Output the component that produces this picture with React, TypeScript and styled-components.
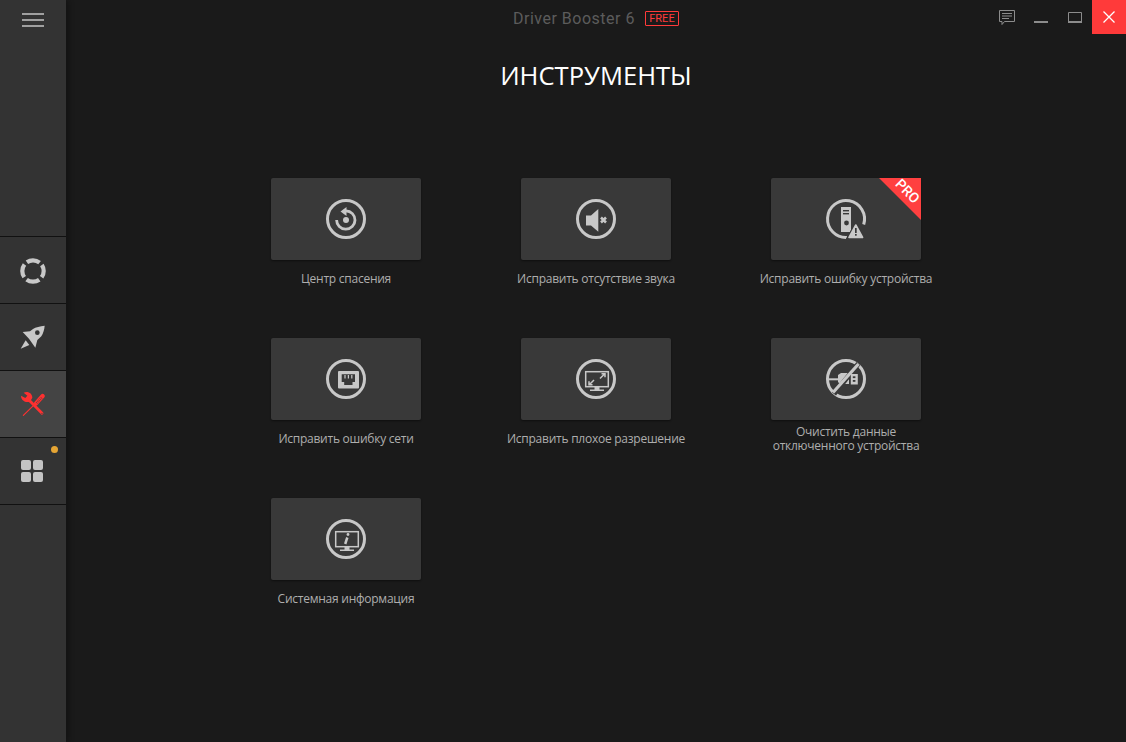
import React from "react";
import styled, { createGlobalStyle } from "styled-components";

const Global = createGlobalStyle`
  html, body { margin: 0; padding: 0; height: 100%; background: #1a1a1a; }
  #root { height: 100%; }
  * { box-sizing: border-box; }
`;

const Shell = styled.div`
  display: flex;
  width: 1126px;
  height: 742px;
  overflow: hidden;
  background: #1a1a1a;
  font-family: "Open Sans", "Noto Sans", sans-serif;
`;

const Sidebar = styled.nav`
  flex: 0 0 66px;
  display: flex;
  flex-direction: column;
  background: #333333;
  box-shadow: 3px 0 5px rgba(0, 0, 0, 0.28);
  z-index: 1;
`;

const MenuButton = styled.div`
  height: 236px;
  padding: 13px 0 0 22px;
  display: flex;
  flex-direction: column;
  gap: 4px;
`;

const MenuBar = styled.span`
  width: 22px;
  height: 2px;
  background: #a0a0a0;
`;

const NavList = styled.div`
  border-top: 1px solid #111111;
`;

const NavItem = styled.div<{ $active?: boolean }>`
  position: relative;
  height: 67px;
  display: flex;
  align-items: center;
  justify-content: center;
  border-bottom: 1px solid #111111;
  background: ${(p) => (p.$active ? "#444444" : "transparent")};
`;

const Dot = styled.span`
  position: absolute;
  left: 51px;
  top: 8px;
  width: 7px;
  height: 7px;
  border-radius: 50%;
  background: #e5a534;
`;

const AppsGrid = styled.div`
  display: grid;
  grid-template-columns: 10px 10px;
  grid-auto-rows: 10px;
  gap: 2px;
  margin-right: 2px;
`;

const AppTile = styled.span`
  border-radius: 2px;
  background: #c4c4c4;
`;

const Main = styled.main`
  flex: 1;
  display: flex;
  flex-direction: column;
  min-width: 0;
`;

const Header = styled.header`
  height: 34px;
  display: grid;
  grid-template-columns: 1fr auto 1fr;
  align-items: center;
`;

const Brand = styled.div`
  grid-column: 2;
  display: flex;
  align-items: center;
  gap: 10px;
  padding-top: 2px;
`;

const BrandName = styled.span`
  font-family: "Roboto", sans-serif;
  font-size: 16px;
  letter-spacing: 0.5px;
  color: #5c5c5c;
`;

const FreeBadge = styled.span`
  width: 34px;
  height: 15px;
  display: flex;
  align-items: center;
  justify-content: center;
  border: 1px solid #ff3a3a;
  border-radius: 1px;
  font-family: "Roboto", sans-serif;
  font-size: 11px;
  color: #ff3a3a;
`;

const Controls = styled.div`
  grid-column: 3;
  justify-self: end;
  display: flex;
`;

const Control = styled.div<{ $close?: boolean }>`
  width: 34px;
  height: 34px;
  display: flex;
  align-items: center;
  justify-content: center;
  background: ${(p) => (p.$close ? "#ff3a3a" : "transparent")};
`;

const Title = styled.h1`
  margin: 24px 0 0;
  height: 36px;
  font-size: 25.6px;
  line-height: 36px;
  font-weight: 400;
  text-align: center;
  color: #ffffff;
`;

const Tools = styled.div`
  width: 750px;
  margin: 84px auto 0;
  display: grid;
  grid-template-columns: repeat(3, 250px);
  row-gap: 40px;
`;

const Tool = styled.div`
  display: flex;
  flex-direction: column;
  align-items: center;
`;

const Card = styled.div`
  position: relative;
  width: 150px;
  height: 82px;
  display: flex;
  align-items: center;
  justify-content: center;
  background: #393939;
  border-radius: 2px;
  box-shadow: 0 1px 2px rgba(0, 0, 0, 0.45);
`;

const ProRibbon = styled.div`
  position: absolute;
  top: 0;
  right: 0;
  width: 42px;
  height: 42px;
  background: #ff4040;
  clip-path: polygon(0 0, 100% 0, 100% 100%);
`;

const ProText = styled.span`
  position: absolute;
  top: 5px;
  left: 15px;
  font-family: "Roboto", sans-serif;
  font-size: 14px;
  font-weight: 500;
  line-height: 16px;
  color: #ffffff;
  transform: rotate(45deg);
`;

const Label = styled.div`
  height: 38px;
  display: flex;
  align-items: center;
  text-align: center;
  white-space: pre-line;
  font-size: 12px;
  letter-spacing: -0.25px;
  line-height: 14px;
  color: #aeaeae;
`;

const C = "#c8c8c8";
const BG = "#393939";

const Ring = () => <circle cx="20" cy="20" r="18.5" fill="none" stroke={C} strokeWidth="3" />;

const Icon: React.FC<{ children: React.ReactNode }> = ({ children }) => (
  <svg width="40" height="40" viewBox="0 0 40 40" style={{ overflow: "visible" }}>
    {children}
  </svg>
);

const Monitor = () => (
  <>
    <rect x="9.7" y="12.7" width="22.6" height="15" fill="none" stroke={C} strokeWidth="1.5" />
    <path d="M18.5 28 H23.5 V31 H18.5 Z" fill={C} />
    <rect x="14" y="30.5" width="14" height="1.5" fill={C} />
  </>
);

const icons: Record<string, React.ReactNode> = {
  rescue: (
    <Icon>
      <Ring />
      <path d="M20 11.8 A 9.2 9.2 0 1 1 10.6 21" fill="none" stroke={C} strokeWidth="2.8" />
      <path d="M14.5 12.5 L20.5 8 V17 Z" fill={C} />
      <circle cx="20" cy="21" r="3" fill={C} />
    </Icon>
  ),
  sound: (
    <Icon>
      <Ring />
      <path d="M10 16.5 H15 L22.3 10 V32.7 L15 26.5 H10 Z" fill={C} />
      <path d="M25 18.5 L30 23.5 M30 18.5 L25 23.5" stroke={C} strokeWidth="2.5" />
    </Icon>
  ),
  device: (
    <Icon>
      <path d="M21 38.5 A 18.5 18.5 0 1 1 37.7 25.5" fill="none" stroke={C} strokeWidth="3" />
      <rect x="15" y="8" width="10" height="25" fill={C} />
      <rect x="17" y="11" width="6" height="1.4" fill={BG} />
      <rect x="17" y="14" width="6" height="1.4" fill={BG} />
      <circle cx="20.5" cy="24" r="2.4" fill={BG} />
      <path d="M29.8 23 L39.5 40.5 H20 Z" fill={BG} stroke={BG} strokeWidth="1" strokeLinejoin="round" />
      <path d="M29.8 26 L36.6 38.5 H23 Z" fill={C} stroke={C} strokeWidth="1.6" strokeLinejoin="round" />
      <rect x="29" y="29" width="1.7" height="5" fill={BG} />
      <rect x="29" y="35" width="1.7" height="1.7" fill={BG} />
    </Icon>
  ),
  network: (
    <Icon>
      <Ring />
      <rect x="12" y="12" width="21" height="17.5" rx="1" fill={C} />
      <path d="M15.7 15.3 H29 V23 H26.5 V26 H18.2 V23 H15.7 Z" fill={BG} />
      <path d="M19 16 V19.5 M22.4 16 V19.5 M25.8 16 V19.5" stroke={C} strokeWidth="1.2" />
    </Icon>
  ),
  resolution: (
    <Icon>
      <Ring />
      <Monitor />
      <path d="M24 19.5 L29 14.5 M25.5 14.8 H29 V18.3" fill="none" stroke={C} strokeWidth="1.5" />
      <path d="M18 21 L13 26 M13 22.2 V25.7 H16.5" fill="none" stroke={C} strokeWidth="1.5" />
    </Icon>
  ),
  unplug: (
    <Icon>
      <Ring />
      <path d="M2 20.3 H12" stroke={C} strokeWidth="2" />
      <path d="M12 16 L15 14 H23 V25 H14 L12 23 Z" fill={C} />
      <path d="M32.5 4.5 L8 35" stroke={BG} strokeWidth="5" />
      <rect x="24.8" y="15" width="7" height="10.5" fill={C} />
      <rect x="26.8" y="17.3" width="2.6" height="1.8" fill={BG} />
      <rect x="26.8" y="21" width="2.6" height="1.8" fill={BG} />
      <path d="M32.5 5 L7 33.5" stroke={C} strokeWidth="3.2" />
    </Icon>
  ),
  info: (
    <Icon>
      <Ring />
      <Monitor />
      <path d="M21.3 18.5 L19.2 25" stroke={C} strokeWidth="2.5" />
      <circle cx="22" cy="15.5" r="1.4" fill={C} />
    </Icon>
  ),
};

const Lifebuoy = () => (
  <svg width="26" height="26" viewBox="0 0 26 26" style={{ marginTop: 1 }}>
    <circle
      cx="13"
      cy="13"
      r="10.7"
      fill="none"
      stroke={C}
      strokeWidth="4.2"
      strokeDasharray="13.5 3.3"
      strokeDashoffset="6.75"
    />
  </svg>
);

const Rocket = () => (
  <svg width="26" height="26" viewBox="58 304 78 78" style={{ marginTop: 1 }}>
    <path
      d="M132 306 C118 308 105 310 97 316 L88 323 L66 325 L85 345 L104 372 L110 349 L122 338 C128 328 131 318 132 306 Z"
      fill={C}
    />
    <circle cx="110" cy="327" r="7" fill="#333333" />
    <path d="M75 350 L86 364 L60 375 Z" fill={C} />
  </svg>
);

const ToolsIcon = () => (
  <svg width="26" height="26" viewBox="60 80 78 78">
    <g fill="none" stroke="#ff3030" strokeLinecap="round">
      <path d="M70 153 L100 124" strokeWidth="3.5" />
      <path d="M108 117 L128 95" strokeWidth="13" />
      <path d="M84 104 L126 147" strokeWidth="8.5" />
    </g>
    <path
      d="M63 94 C63 108 76 116 90 112 L97 100 C97 87 84 79 71 85 L82 94 L76 101 Z"
      fill="#ff3030"
    />
    <path d="M110 116 L127 98" stroke="#444444" strokeWidth="7" strokeDasharray="1.5 3.5" fill="none" />
    <circle cx="126" cy="147" r="2" fill="#444444" />
  </svg>
);

const ChatIcon = () => (
  <svg width="16" height="16" viewBox="0 0 16 16" style={{ marginTop: 2 }}>
    <path d="M0.5 0.5 H15.5 V11.5 H5.5 L3 14.5 V11.5 H0.5 Z" fill="none" stroke="#8c8c8c" />
    <path d="M3 3.5 H13 M3 6 H13 M3 8.5 H10" stroke="#8c8c8c" />
  </svg>
);

const MinIcon = () => (
  <svg width="14" height="12" viewBox="0 0 14 12" style={{ marginTop: 2 }}>
    <rect x="0" y="9" width="14" height="2" fill="#8c8c8c" />
  </svg>
);

const MaxIcon = () => (
  <svg width="14" height="11" viewBox="0 0 14 11" style={{ marginTop: 1 }}>
    <path d="M0.5 0.5 H13.5 V10 H0.5 Z" fill="none" stroke="#8c8c8c" />
    <rect x="0" y="9" width="14" height="2" fill="#8c8c8c" />
  </svg>
);

const CloseIcon = () => (
  <svg width="12" height="12" viewBox="0 0 12 12">
    <path d="M0.5 0.5 L11.5 11.5 M11.5 0.5 L0.5 11.5" stroke="#ffffff" strokeWidth="1.3" />
  </svg>
);

const tools = [
  { icon: "rescue", label: "Центр спасения" },
  { icon: "sound", label: "Исправить отсутствие звука" },
  { icon: "device", label: "Исправить ошибку устройства", pro: true },
  { icon: "network", label: "Исправить ошибку сети" },
  { icon: "resolution", label: "Исправить плохое разрешение" },
  { icon: "unplug", label: "Очистить данные\nотключенного устройства" },
  { icon: "info", label: "Системная информация" },
];

export default function App() {
  return (
    <Shell>
      <Global />
      <Sidebar>
        <MenuButton>
          <MenuBar />
          <MenuBar />
          <MenuBar />
        </MenuButton>
        <NavList>
          <NavItem>
            <Lifebuoy />
          </NavItem>
          <NavItem>
            <Rocket />
          </NavItem>
          <NavItem $active>
            <ToolsIcon />
          </NavItem>
          <NavItem>
            <Dot />
            <AppsGrid>
              <AppTile />
              <AppTile />
              <AppTile />
              <AppTile />
            </AppsGrid>
          </NavItem>
        </NavList>
      </Sidebar>
      <Main>
        <Header>
          <Brand>
            <BrandName>Driver Booster 6</BrandName>
            <FreeBadge>FREE</FreeBadge>
          </Brand>
          <Controls>
            <Control>
              <ChatIcon />
            </Control>
            <Control>
              <MinIcon />
            </Control>
            <Control>
              <MaxIcon />
            </Control>
            <Control $close>
              <CloseIcon />
            </Control>
          </Controls>
        </Header>
        <Title>ИНСТРУМЕНТЫ</Title>
        <Tools>
          {tools.map((t) => (
            <Tool key={t.icon}>
              <Card>
                {icons[t.icon]}
                {t.pro && (
                  <ProRibbon>
                    <ProText>PRO</ProText>
                  </ProRibbon>
                )}
              </Card>
              <Label>{t.label}</Label>
            </Tool>
          ))}
        </Tools>
      </Main>
    </Shell>
  );
}
